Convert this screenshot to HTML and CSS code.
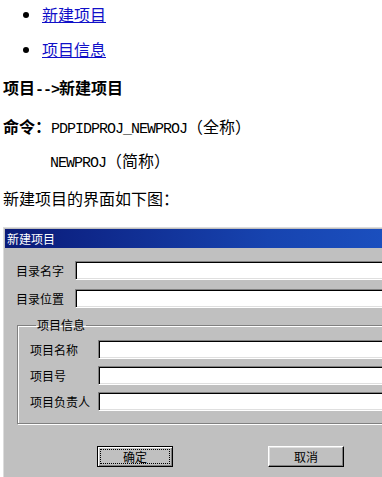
FILE: index.html
```html
<!DOCTYPE html>
<html lang="zh-CN">
<head>
  <meta charset="UTF-8" />
  <meta name="viewport" content="width=device-width, initial-scale=1.0" />
  <title>新建项目</title>
  <link rel="stylesheet" href="styles.css">
</head>
<body>
  <ul class="toc">
    <li><a href="#">新建项目</a></li>
    <li><a href="#">项目信息</a></li>
  </ul>

  <p class="heading">项目<span class="code">--&gt;</span>新建项目</p>
  <p class="cmd"><b>命令：</b><span class="code">PDPIDPROJ_NEWPROJ</span>（全称）</p>
  <p class="cmd indent"><span class="code">NEWPROJ</span>（简称）</p>
  <p class="text">新建项目的界面如下图：</p>

  <div class="dialog">
    <div class="titlebar">新建项目</div>
    <div class="dialog-body">
      <div class="row">
        <label>目录名字</label>
        <input type="text">
      </div>
      <div class="row">
        <label>目录位置</label>
        <input type="text">
      </div>

      <fieldset class="group">
        <legend>项目信息</legend>
        <div class="row">
          <label>项目名称</label>
          <input type="text">
        </div>
        <div class="row">
          <label>项目号</label>
          <input type="text">
        </div>
        <div class="row">
          <label>项目负责人</label>
          <input type="text">
        </div>
      </fieldset>

      <div class="buttons">
        <button class="btn btn-default"><span>确定</span></button>
        <button class="btn"><span>取消</span></button>
      </div>
    </div>
  </div>
</body>
</html>
```

FILE: styles.css
```css
html, body {
  overflow: hidden;
}
body {
  margin: 0;
  padding: 4px 3px 0;
  background-color: white;
  color: #000;
  font-family: "Noto Sans CJK SC", "Liberation Sans", sans-serif;
  font-size: 16px;
  line-height: 20px;
}
p {
  margin: 0;
  height: 20px;
}
.toc {
  margin: 0;
  padding-left: 39px;
}
.toc li {
  height: 20px;
}
.toc li + li {
  margin-top: 15px;
}
.toc a {
  color: #1010c8;
}
.heading {
  margin-top: 18px;
  font-weight: bold;
}
.cmd {
  margin-top: 19px;
}
.cmd.indent {
  margin-top: 14px;
  padding-left: 47px;
}
.code {
  font-family: "Liberation Mono", monospace;
  font-size: 15px;
  letter-spacing: -1px;
  line-height: 1;
}
.text {
  margin-top: 18px;
}

/* dialog picture */
.dialog {
  width: 440px;
  margin-top: 19px;
  padding: 1px;
  border: 1px solid #dcdcdc;
  background-color: #c0c0c0;
  font-size: 12px;
  line-height: 14px;
}
.titlebar {
  height: 19px;
  line-height: 19px;
  padding-left: 2px;
  color: white;
  background: linear-gradient(to right, #0a1a78, #1744b0 60%, #1d55c6);
}
.dialog-body {
  padding: 13px 0 12px 11px;
}
.row {
  display: flex;
  align-items: center;
}
.row + .row {
  margin-top: 9px;
}
.row label {
  width: 59px;
  flex: none;
}
.row input {
  flex: 1;
  height: 19px;
  margin: 0;
  padding: 0;
  box-sizing: border-box;
  background-color: white;
  border: 1px solid;
  border-color: #808080 #ffffff #ffffff #808080;
  box-shadow: inset 1px 1px 0 #000, inset -1px -1px 0 #dfdfdf;
}
.group {
  margin: 10px 0 0 1px;
  padding: 8px 0 12px 12px;
  border: 1px solid #808080;
  box-shadow: inset 1px 1px 0 #fff, 1px 1px 0 #fff;
}
.group legend {
  margin-left: 6px;
  padding: 0 1px;
  line-height: 14px;
}
.group .row + .row {
  margin-top: 7px;
}
.group .row label {
  width: 68px;
}
.buttons {
  display: flex;
  gap: 95px;
  margin-top: 22px;
  padding-left: 81px;
}
.btn {
  width: 76px;
  height: 21px;
  padding: 2px;
  box-sizing: border-box;
  background-color: #c0c0c0;
  border: 1px solid;
  border-color: #ffffff #000 #000 #ffffff;
  box-shadow: inset -1px -1px 0 #808080, inset 1px 1px 0 #dfdfdf;
  font-family: inherit;
  font-size: 12px;
  color: #000;
}
.btn span {
  display: block;
  line-height: 13px;
  border: 1px solid transparent;
}
.btn-default {
  border-color: #000;
  box-shadow: inset 1px 1px 0 #fff, inset -1px -1px 0 #808080;
}
.btn-default span {
  border: 1px dotted #000;
}
```
